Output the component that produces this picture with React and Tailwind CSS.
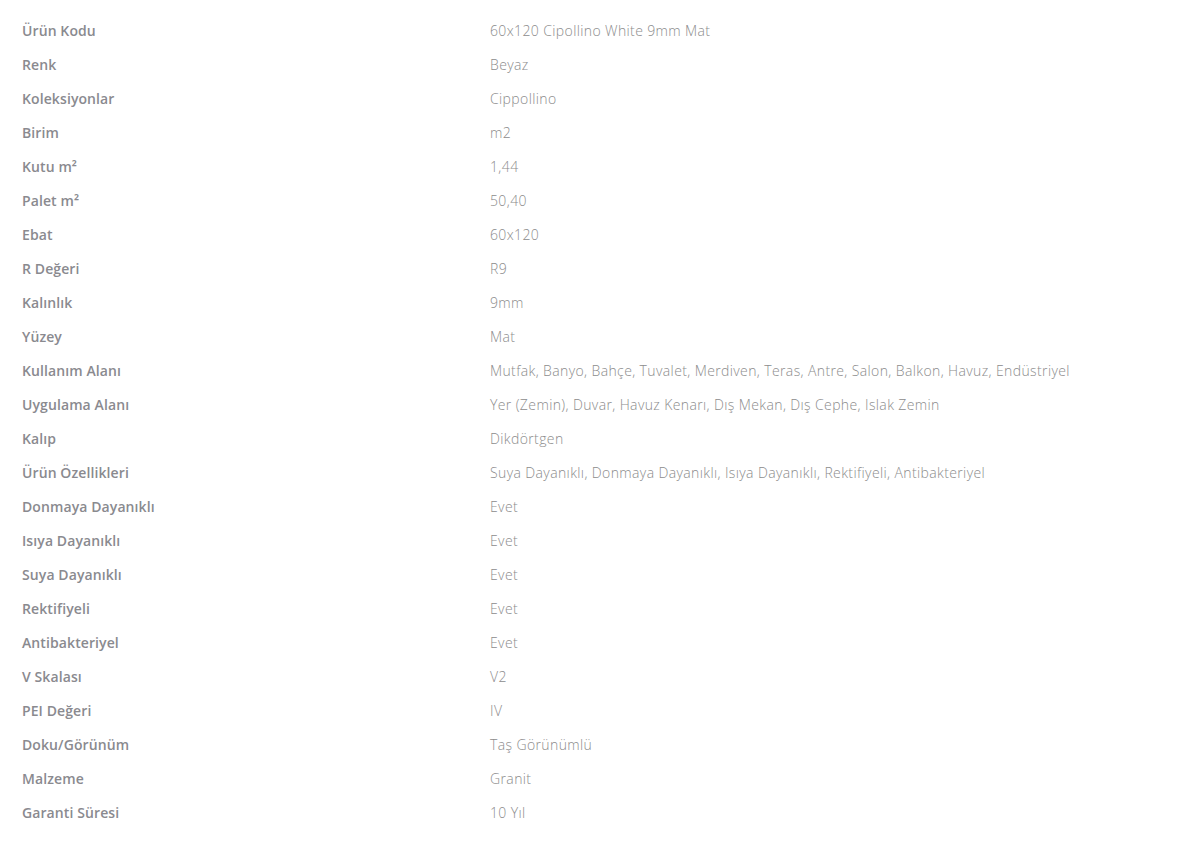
const specs = [
  ['Ürün Kodu', '60x120 Cipollino White 9mm Mat'],
  ['Renk', 'Beyaz'],
  ['Koleksiyonlar', 'Cippollino'],
  ['Birim', 'm2'],
  ['Kutu m²', '1,44'],
  ['Palet m²', '50,40'],
  ['Ebat', '60x120'],
  ['R Değeri', 'R9'],
  ['Kalınlık', '9mm'],
  ['Yüzey', 'Mat'],
  ['Kullanım Alanı', 'Mutfak, Banyo, Bahçe, Tuvalet, Merdiven, Teras, Antre, Salon, Balkon, Havuz, Endüstriyel'],
  ['Uygulama Alanı', 'Yer (Zemin), Duvar, Havuz Kenarı, Dış Mekan, Dış Cephe, Islak Zemin'],
  ['Kalıp', 'Dikdörtgen'],
  ['Ürün Özellikleri', 'Suya Dayanıklı, Donmaya Dayanıklı, Isıya Dayanıklı, Rektifiyeli, Antibakteriyel'],
  ['Donmaya Dayanıklı', 'Evet'],
  ['Isıya Dayanıklı', 'Evet'],
  ['Suya Dayanıklı', 'Evet'],
  ['Rektifiyeli', 'Evet'],
  ['Antibakteriyel', 'Evet'],
  ['V Skalası', 'V2'],
  ['PEI Değeri', 'IV'],
  ['Doku/Görünüm', 'Taş Görünümlü'],
  ['Malzeme', 'Granit'],
  ['Garanti Süresi', '10 Yıl'],
];

const App = () => {
  return (
    <div className="min-h-screen bg-white font-['Open_Sans',sans-serif] text-sm">
      <div className="pt-[14px] pl-[22px]">
        {specs.map(([label, value]) => (
          <div key={label} className="grid grid-cols-[468px_1fr] h-[34px] items-center">
            <div className="font-semibold text-[#8a8a8f] tracking-[0.1px]">{label}</div>
            <div className="font-light text-[#8c8c8c] tracking-[0.38px]">{value}</div>
          </div>
        ))}
      </div>
    </div>
  );
};

export default App;
